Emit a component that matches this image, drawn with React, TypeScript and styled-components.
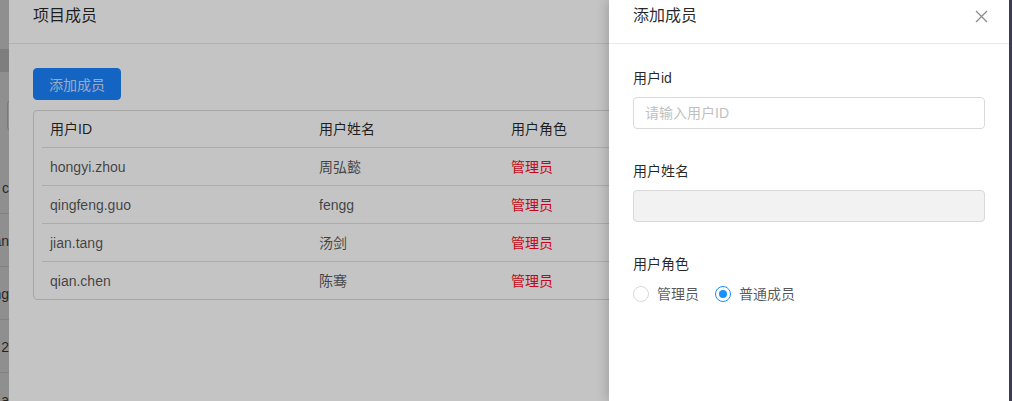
import React from "react";
import styled, { createGlobalStyle } from "styled-components";

const GlobalStyle = createGlobalStyle`
  html, body { margin: 0; padding: 0; }
  body {
    font-family: "Liberation Sans", "Noto Sans CJK SC", sans-serif;
    font-size: 14px;
    color: rgba(0, 0, 0, 0.85);
  }
  * { box-sizing: border-box; }
`;

const Screen = styled.div`
  display: flex;
  width: 1012px;
  height: 401px;
  overflow: hidden;
`;

const Stage = styled.div`
  position: relative;
  flex: 1;
  height: 100%;
  overflow: hidden;
  background: #fff;
`;

const WindowEdge = styled.div`
  width: 3px;
  height: 100%;
  background: #3d3c58;
`;

/* ---------- page behind the modal ---------- */
const Page = styled.div`
  display: flex;
  flex-direction: column;
  height: 100%;
  background: #fff;
  & > * {
    flex-shrink: 0;
  }
`;

const PageHeader = styled.div`
  height: 49px;
  background: #fff;
`;

const PageTabs = styled.div`
  height: 23px;
  background: #e1e1e1;
`;

const PageToolbar = styled.div`
  height: 89px;
  padding: 28px 0 0 7px;
`;

const PageInput = styled.div`
  width: 200px;
  height: 31px;
  border: 1px solid #d9d9d9;
  border-radius: 4px;
`;

const PageRow = styled.div`
  display: flex;
  align-items: center;
  justify-content: flex-end;
  width: 9px;
  height: 53px;
  border-bottom: 1px solid #e8e8e8;
  white-space: nowrap;
  color: rgba(0, 0, 0, 0.75);
  font-size: 14px;
  padding-top: 2px;
`;

/* ---------- masks ---------- */
const Mask = styled.div<{ $alpha: number }>`
  position: absolute;
  inset: 0;
  background: rgba(0, 0, 0, ${(p) => p.$alpha});
`;

/* ---------- modal ---------- */
const Modal = styled.div`
  position: absolute;
  top: 0;
  bottom: 0;
  left: 9px;
  width: 994px;
  background: #fff;
  display: flex;
  flex-direction: column;
`;

const PanelHeader = styled.div`
  display: flex;
  align-items: flex-start;
  justify-content: space-between;
  height: 44px;
  padding: 5px 24px 0;
  border-bottom: 1px solid #e8e8e8;
`;

const PanelTitle = styled.div`
  font-size: 16px;
  line-height: 22px;
  color: rgba(0, 0, 0, 0.85);
`;

const ModalBody = styled.div`
  padding: 24px 24px;
  display: flex;
  flex-direction: column;
  align-items: flex-start;
`;

const PrimaryButton = styled.button`
  height: 32px;
  padding: 0 15px;
  border: 1px solid #1a82ff;
  border-radius: 4px;
  background: #1a82ff;
  color: rgba(225, 235, 255, 0.9);
  font-family: inherit;
  font-size: 14px;
  cursor: pointer;
`;

const Table = styled.div`
  align-self: stretch;
  margin-top: 10px;
  padding: 0 8px;
  border: 1px solid #d9d9d9;
  border-radius: 4px;
`;

const TableRow = styled.div<{ $head?: boolean }>`
  display: grid;
  grid-template-columns: 269px 192px 1fr;
  height: 38px;
  align-items: center;
  border-bottom: 1px solid #e0e0e0;
  color: ${(p) => (p.$head ? "rgba(0,0,0,0.85)" : "rgba(0,0,0,0.68)")};
  &:last-child {
    border-bottom: none;
    height: 37px;
  }
  ${(p) => (p.$head ? "height: 37px;" : "")}
`;

const Cell = styled.div<{ $danger?: boolean }>`
  padding: 0 8px;
  line-height: 22px;
  white-space: nowrap;
  ${(p) => (p.$danger ? "color: #ff0a1e;" : "")}
`;

/* ---------- drawer ---------- */
const Drawer = styled.div`
  position: absolute;
  top: 0;
  bottom: 0;
  right: 0;
  width: 400px;
  background: #fff;
  box-shadow: -3px 0 10px rgba(0, 0, 0, 0.16);
  display: flex;
  flex-direction: column;
`;

const CloseButton = styled.button`
  width: 16px;
  height: 16px;
  margin-top: 3px;
  margin-right: -4px;
  padding: 0;
  border: none;
  background: transparent;
  color: rgba(0, 0, 0, 0.45);
  display: flex;
  align-items: center;
  justify-content: center;
  cursor: pointer;
`;

const DrawerBody = styled.div`
  padding: 23px 24px;
  display: flex;
  flex-direction: column;
  gap: 31px;
`;

const FormItem = styled.div`
  display: flex;
  flex-direction: column;
`;

const Label = styled.label`
  line-height: 22px;
  padding-bottom: 8px;
  color: rgba(0, 0, 0, 0.85);
`;

const Input = styled.input`
  width: 100%;
  height: 32px;
  padding: 4px 11px;
  border: 1px solid #d9d9d9;
  border-radius: 4px;
  font-family: inherit;
  font-size: 14px;
  color: rgba(0, 0, 0, 0.85);
  background: #fff;
  outline: none;
  &::placeholder {
    color: #bfbfbf;
  }
  &:disabled {
    background: #f2f2f2;
  }
`;

const RadioGroup = styled.div`
  display: flex;
  align-items: center;
  gap: 16px;
  height: 22px;
`;

const RadioOption = styled.label`
  display: flex;
  align-items: center;
  gap: 8px;
  color: rgba(0, 0, 0, 0.68);
  line-height: 22px;
  cursor: pointer;
`;

const RadioCircle = styled.span<{ $checked?: boolean }>`
  position: relative;
  width: 16px;
  height: 16px;
  border-radius: 50%;
  border: 1px solid ${(p) => (p.$checked ? "#1890ff" : "#d9d9d9")};
  background: #fff;
  &::after {
    content: "";
    display: ${(p) => (p.$checked ? "block" : "none")};
    position: absolute;
    left: 3px;
    top: 3px;
    width: 8px;
    height: 8px;
    border-radius: 50%;
    background: #1890ff;
  }
`;

const members = [
  { id: "hongyi.zhou", name: "周弘懿", role: "管理员" },
  { id: "qingfeng.guo", name: "fengg", role: "管理员" },
  { id: "jian.tang", name: "汤剑", role: "管理员" },
  { id: "qian.chen", name: "陈骞", role: "管理员" },
];

const pageRows = ["c", "an", "ng", "2", "a"];

export default function App() {
  return (
    <>
      <GlobalStyle />
      <Screen>
        <Stage>
          <Page>
            <PageHeader />
            <PageTabs />
            <PageToolbar>
              <PageInput />
            </PageToolbar>
            {pageRows.map((t) => (
              <PageRow key={t}>{t}</PageRow>
            ))}
          </Page>
          <Mask $alpha={0.27} />
          <Modal>
            <PanelHeader>
              <PanelTitle>项目成员</PanelTitle>
            </PanelHeader>
            <ModalBody>
              <PrimaryButton>添加成员</PrimaryButton>
              <Table>
                <TableRow $head>
                  <Cell>用户ID</Cell>
                  <Cell>用户姓名</Cell>
                  <Cell>用户角色</Cell>
                </TableRow>
                {members.map((m) => (
                  <TableRow key={m.id}>
                    <Cell>{m.id}</Cell>
                    <Cell>{m.name}</Cell>
                    <Cell $danger>{m.role}</Cell>
                  </TableRow>
                ))}
              </Table>
            </ModalBody>
          </Modal>
          <Mask $alpha={0.23} />
          <Drawer>
            <PanelHeader>
              <PanelTitle>添加成员</PanelTitle>
              <CloseButton aria-label="close">
                <svg width="13" height="13" viewBox="0 0 13 13">
                  <path
                    d="M1 1 L12 12 M12 1 L1 12"
                    stroke="currentColor"
                    strokeWidth="1.3"
                    fill="none"
                  />
                </svg>
              </CloseButton>
            </PanelHeader>
            <DrawerBody>
              <FormItem>
                <Label>用户id</Label>
                <Input placeholder="请输入用户ID" />
              </FormItem>
              <FormItem>
                <Label>用户姓名</Label>
                <Input disabled />
              </FormItem>
              <FormItem>
                <Label>用户角色</Label>
                <RadioGroup>
                  <RadioOption>
                    <RadioCircle />
                    管理员
                  </RadioOption>
                  <RadioOption>
                    <RadioCircle $checked />
                    普通成员
                  </RadioOption>
                </RadioGroup>
              </FormItem>
            </DrawerBody>
          </Drawer>
        </Stage>
        <WindowEdge />
      </Screen>
    </>
  );
}
